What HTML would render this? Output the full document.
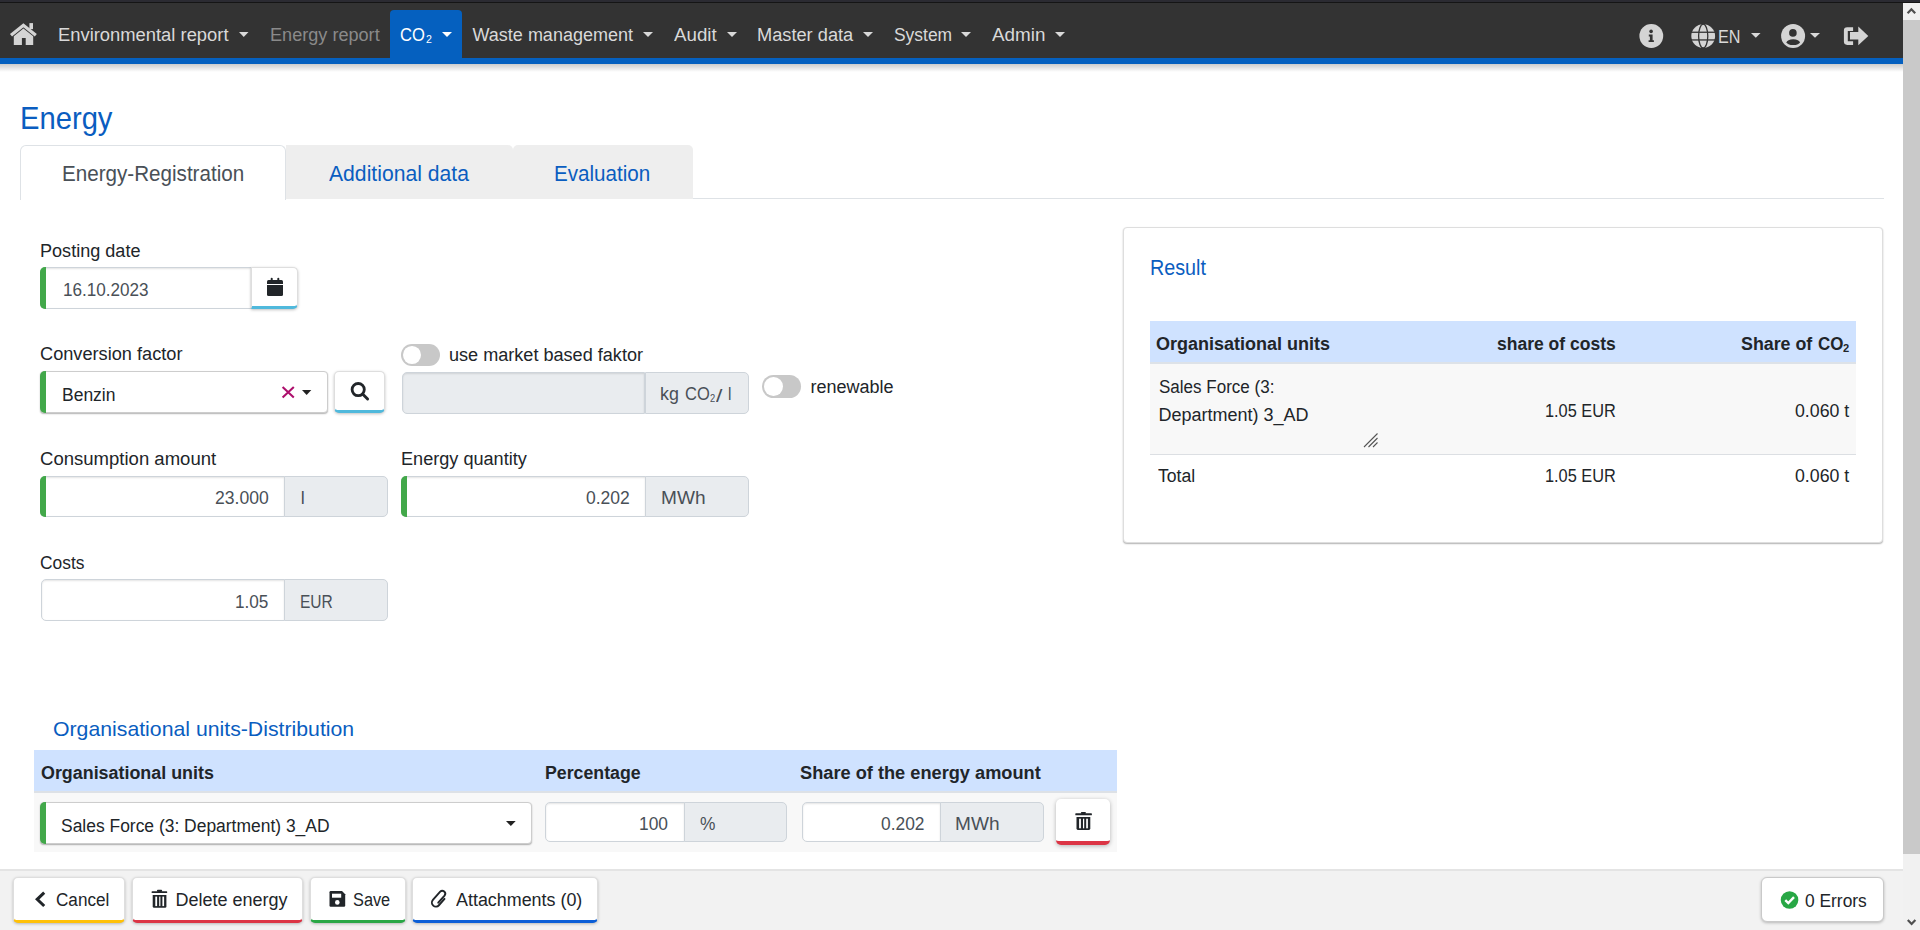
<!DOCTYPE html>
<html><head><meta charset="utf-8"><title>Energy</title>
<style>
html,body{margin:0;padding:0;width:1920px;height:930px;overflow:hidden;background:#fff;}
body{position:relative;font-family:"Liberation Sans",sans-serif;}
.t{position:absolute;white-space:nowrap;transform-origin:0 0;}
.b{position:absolute;}
svg.b{overflow:visible;}
</style></head><body>
<div class="b" style="left:0px;top:0px;width:1920px;height:2px;background:#2b2b32"></div>
<div class="b" style="left:0px;top:2px;width:1920px;height:1px;background:#151515"></div>
<div class="b" style="left:0px;top:3px;width:1903px;height:55px;background:#333333"></div>
<div class="b" style="left:0px;top:58px;width:1903px;height:6px;background:#0560bf"></div>
<div class="b" style="left:0px;top:64px;width:1903px;height:8px;background:linear-gradient(rgba(0,0,0,.2),rgba(0,0,0,0))"></div>
<div class="b" style="left:390px;top:10px;width:72px;height:48px;background:#0560bf;border-radius:4px 4px 0 0"></div>
<svg class="b" style="left:8px;top:20px;" width="32" height="28" viewBox="8 20 32 28"><path d="M11,35.3 L23.4,25.3 L35.8,35.3" fill="none" stroke="#d4d4d4" stroke-width="3.3"/><g fill="#d4d4d4"><rect x="29.4" y="23.1" width="3.6" height="6"/><path d="M13.8,45.1 V36.3 L23.4,28.6 L33.2,36.3 V45.1 H25.7 V38.1 H21.9 V45.1 Z"/></g></svg>
<div class="t" style="left:58.48px;top:25.20px;font-size:18px;line-height:20px;color:#d9d9d9;transform:scaleX(1.0205);">Environmental report</div>
<svg class="b" style="left:238px;top:31px;" width="11.5" height="7" viewBox="238 31 11.5 7"><polygon points="239,32 248.5,32 243.75,37" fill="#d9d9d9"/></svg>
<div class="t" style="left:269.50px;top:25.20px;font-size:18px;line-height:20px;color:#8a8a8a;transform:scaleX(1.0056);">Energy report</div>
<div class="t" style="left:400.32px;top:24.90px;font-size:18px;line-height:20px;color:#ffffff;transform:scaleX(0.9211);">CO</div>
<div class="t" style="left:426.10px;top:32.90px;font-size:11px;line-height:12px;color:#ffffff;transform:scaleX(0.9648);">2</div>
<svg class="b" style="left:441px;top:31px;" width="12" height="7" viewBox="441 31 12 7"><polygon points="442,32 452,32 447.0,37" fill="#ffffff"/></svg>
<div class="t" style="left:472.54px;top:25.20px;font-size:18px;line-height:20px;color:#d9d9d9;">Waste management</div>
<svg class="b" style="left:642px;top:31px;" width="12" height="7" viewBox="642 31 12 7"><polygon points="643,32 653,32 648.0,37" fill="#d9d9d9"/></svg>
<div class="t" style="left:674.24px;top:25.20px;font-size:18px;line-height:20px;color:#d9d9d9;transform:scaleX(1.0405);">Audit</div>
<svg class="b" style="left:726px;top:31px;" width="12" height="7" viewBox="726 31 12 7"><polygon points="727,32 737,32 732.0,37" fill="#d9d9d9"/></svg>
<div class="t" style="left:757.19px;top:25.20px;font-size:18px;line-height:20px;color:#d9d9d9;transform:scaleX(1.0122);">Master data</div>
<svg class="b" style="left:862px;top:31px;" width="12" height="7" viewBox="862 31 12 7"><polygon points="863,32 873,32 868.0,37" fill="#d9d9d9"/></svg>
<div class="t" style="left:893.52px;top:25.20px;font-size:18px;line-height:20px;color:#d9d9d9;transform:scaleX(0.9680);">System</div>
<svg class="b" style="left:960px;top:31px;" width="12" height="7" viewBox="960 31 12 7"><polygon points="961,32 971,32 966.0,37" fill="#d9d9d9"/></svg>
<div class="t" style="left:992.14px;top:25.20px;font-size:18px;line-height:20px;color:#d9d9d9;transform:scaleX(1.0470);">Admin</div>
<svg class="b" style="left:1054px;top:31px;" width="12" height="7" viewBox="1054 31 12 7"><polygon points="1055,32 1065,32 1060.0,37" fill="#d9d9d9"/></svg>
<svg class="b" style="left:1636px;top:21px;" width="32" height="30" viewBox="1636 21 32 30"><circle cx="1651.3" cy="36" r="11.9" fill="#d4d4d4"/><circle cx="1651.1" cy="31.4" r="1.8" fill="#333"/><path d="M1648.8,34.6 H1652.6 V40.2 H1653.9 V42 H1648.6 V40.2 H1649.9 V36.4 H1648.8 Z" fill="#333"/></svg>
<svg class="b" style="left:1688px;top:21px;" width="32" height="30" viewBox="1688 21 32 30"><circle cx="1703.2" cy="36.1" r="11.9" fill="#d4d4d4"/><ellipse cx="1703.2" cy="36.1" rx="4.6" ry="11.9" fill="none" stroke="#333" stroke-width="1.3"/><rect x="1691" y="31.6" width="24.5" height="1.3" fill="#333"/><rect x="1691" y="39.3" width="24.5" height="1.3" fill="#333"/></svg>
<div class="t" style="left:1718.10px;top:26.80px;font-size:18px;line-height:20px;color:#d9d9d9;transform:scaleX(0.8991);">EN</div>
<svg class="b" style="left:1750.4px;top:32px;" width="11.599999999999909" height="6.700000000000003" viewBox="1750.4 32 11.599999999999909 6.700000000000003"><polygon points="1751.4,33 1761,33 1756.2,37.7" fill="#d9d9d9"/></svg>
<svg class="b" style="left:1778px;top:21px;" width="32" height="30" viewBox="1778 21 32 30"><circle cx="1793.1" cy="36" r="12" fill="#d4d4d4"/><circle cx="1792.9" cy="32.9" r="3.8" fill="#333"/><ellipse cx="1793.2" cy="42.2" rx="6.6" ry="2.9" fill="#333"/></svg>
<svg class="b" style="left:1809px;top:32px;" width="12" height="6.799999999999997" viewBox="1809 32 12 6.799999999999997"><polygon points="1810,33 1820,33 1815.0,37.8" fill="#d9d9d9"/></svg>
<svg class="b" style="left:1840px;top:22px;" width="32" height="28" viewBox="1840 22 32 28"><path d="M1853.1,27.2 H1847.2 Q1843.9,27.2 1843.9,30.5 V41.6 Q1843.9,44.9 1847.2,44.9 H1853.1 V41.2 H1847.8 V30.9 H1853.1 Z" fill="#d4d4d4"/><path d="M1850,32 H1858.3 V26.6 L1868.3,36 L1858.3,45.2 V39.6 H1850 Z" fill="#d4d4d4"/></svg>
<div class="t" style="left:20.38px;top:100.10px;font-size:32px;line-height:36px;color:#0a5dc0;transform:scaleX(0.9119);">Energy</div>
<div class="b" style="left:20px;top:198px;width:1864px;height:1px;background:#dee2e6"></div>
<div class="b" style="left:20px;top:145px;width:266px;height:55px;background:#fff;border:1px solid #dee2e6;border-bottom:none;border-radius:6px 6px 0 0;box-sizing:border-box"></div>
<div class="b" style="left:286px;top:145px;width:226.6px;height:53.5px;background:#eeeeee;border-radius:0 5px 0 0"></div>
<div class="b" style="left:513px;top:145px;width:179.6px;height:53.5px;background:#eeeeee;border-radius:5px 5px 0 0"></div>
<div class="t" style="left:61.54px;top:161.10px;font-size:22px;line-height:25px;color:#495057;transform:scaleX(0.9371);">Energy-Registration</div>
<div class="t" style="left:329.33px;top:161.10px;font-size:22px;line-height:25px;color:#0a5dc0;transform:scaleX(0.9614);">Additional data</div>
<div class="t" style="left:554.44px;top:161.10px;font-size:22px;line-height:25px;color:#0a5dc0;transform:scaleX(0.9363);">Evaluation</div>
<div class="t" style="left:40.40px;top:241.00px;font-size:18px;line-height:20px;color:#212529;transform:scaleX(1.0038);">Posting date</div>
<div class="b" style="left:40px;top:267px;width:212px;height:41.5px;background:#fff;border:1px solid #ced4da;box-sizing:border-box;border-radius:5px 0 0 5px;box-shadow:inset 0 1px 2px rgba(0,0,0,.11);"></div>
<div class="b" style="left:40px;top:267px;width:6px;height:41.5px;background:#42a84a;border-radius:5px 0 0 5px"></div>
<div class="t" style="left:62.56px;top:279.50px;font-size:18px;line-height:20px;color:#495057;transform:scaleX(0.9500);">16.10.2023</div>
<div class="b" style="left:251px;top:266.5px;width:47px;height:42.5px;background:#fff;box-sizing:border-box;border-radius:0 5px 5px 0;border:1px solid #dedede;border-bottom:3px solid #50b9dc;box-shadow:0 1px 3px rgba(0,0,0,.25)"></div>
<svg class="b" style="left:265px;top:276px;" width="20" height="22" viewBox="265 276 20 22"><g fill="#212529"><rect x="270.7" y="277.8" width="2" height="3" rx="1"/><rect x="277.3" y="277.8" width="2" height="3" rx="1"/><path d="M267,281.5 Q267,280 268.5,280 H281.5 Q283,280 283,281.5 V284 H267 Z"/><path d="M267,285 H283 V294.6 Q283,296.1 281.5,296.1 H268.5 Q267,296.1 267,294.6 Z"/></g></svg>
<div class="t" style="left:39.74px;top:344.00px;font-size:18px;line-height:20px;color:#212529;transform:scaleX(1.0100);">Conversion factor</div>
<div class="b" style="left:40px;top:371px;width:288px;height:42px;background:#fff;border:1px solid #cdcdcd;box-sizing:border-box;border-radius:4px;box-shadow:0 1px 1.5px rgba(0,0,0,.3);"></div>
<div class="b" style="left:40px;top:371px;width:6px;height:42px;background:#42a84a;border-radius:5px 0 0 5px"></div>
<div class="t" style="left:61.83px;top:385.00px;font-size:18px;line-height:20px;color:#212529;transform:scaleX(0.9716);">Benzin</div>
<svg class="b" style="left:280px;top:384px;" width="17" height="16" viewBox="280 384 17 16"><path d="M282.6,387 L293.8,397.4 M293.8,387 L282.6,397.4" stroke="#ad0f6c" stroke-width="2.1"/></svg>
<svg class="b" style="left:300.6px;top:389px;" width="11.299999999999955" height="7" viewBox="300.6 389 11.299999999999955 7"><polygon points="301.6,390 310.9,390 306.25,395" fill="#222"/></svg>
<div class="b" style="left:334.4px;top:370.6px;width:50.9px;height:42.2px;background:#fff;box-sizing:border-box;border-radius:5px;border:1px solid #dedede;border-bottom:3px solid #50b9dc;box-shadow:0 1px 3px rgba(0,0,0,.25)"></div>
<svg class="b" style="left:348px;top:379px;" width="24" height="24" viewBox="348 379 24 24"><circle cx="358.2" cy="389.6" r="6.1" fill="none" stroke="#212529" stroke-width="2.8"/><path d="M362.6,394 L367.6,399" stroke="#212529" stroke-width="2.9" stroke-linecap="round"/></svg>
<div class="b" style="left:401px;top:344.2px;width:39px;height:21.8px;background:#c8c8c8;border-radius:10.900000000000006px"></div>
<div class="b" style="left:403px;top:346.2px;width:17.8px;height:17.8px;background:#fff;border-radius:50%"></div>
<div class="t" style="left:448.86px;top:344.70px;font-size:18px;line-height:20px;color:#212529;transform:scaleX(1.0046);">use market based faktor</div>
<div class="b" style="left:401.5px;top:372.3px;width:243.5px;height:41.7px;background:#e9ecef;border:1px solid #ced4da;box-sizing:border-box;border-radius:5px 0 0 5px;box-shadow:inset 0 1px 2px rgba(0,0,0,.11);"></div>
<div class="b" style="left:644.5px;top:372.3px;width:104.1px;height:41.7px;background:#e9ecef;border:1px solid #ced4da;box-sizing:border-box;border-radius:0 5px 5px 0"></div>
<div class="t" style="left:660.05px;top:383.90px;font-size:18px;line-height:20px;color:#495057;transform:scaleX(0.9922);">kg</div>
<div class="t" style="left:684.72px;top:383.90px;font-size:18px;line-height:20px;color:#495057;transform:scaleX(0.9172);">CO</div>
<div class="t" style="left:710.10px;top:391.80px;font-size:11px;line-height:12px;color:#495057;transform:scaleX(0.8483);">2</div>
<div class="t" style="left:716.18px;top:385.50px;font-size:18px;line-height:20px;color:#495057;transform:scaleX(1.2740);">/</div>
<div class="t" style="left:728.48px;top:383.90px;font-size:18px;line-height:20px;color:#495057;transform:scaleX(0.8516);">l</div>
<div class="b" style="left:762.3px;top:375.2px;width:38.7px;height:22.8px;background:#c8c8c8;border-radius:11.400000000000006px"></div>
<div class="b" style="left:764.3px;top:377.2px;width:18.8px;height:18.8px;background:#fff;border-radius:50%"></div>
<div class="t" style="left:810.54px;top:377.00px;font-size:18px;line-height:20px;color:#212529;">renewable</div>
<div class="t" style="left:39.72px;top:449.00px;font-size:18px;line-height:20px;color:#212529;transform:scaleX(1.0297);">Consumption amount</div>
<div class="b" style="left:40px;top:476px;width:245px;height:41px;background:#fff;border:1px solid #ced4da;box-sizing:border-box;border-radius:5px 0 0 5px;box-shadow:inset 0 1px 2px rgba(0,0,0,.11);"></div>
<div class="b" style="left:40px;top:476px;width:6px;height:41px;background:#42a84a;border-radius:5px 0 0 5px"></div>
<div class="b" style="left:284.3px;top:476px;width:103.5px;height:41px;background:#e9ecef;border:1px solid #ced4da;box-sizing:border-box;border-radius:0 5px 5px 0"></div>
<div class="t" style="left:215.19px;top:487.60px;font-size:18px;line-height:20px;color:#495057;transform:scaleX(0.9765);">23.000</div>
<div class="t" style="left:300.74px;top:487.60px;font-size:18px;line-height:20px;color:#495057;">l</div>
<div class="t" style="left:401.00px;top:449.00px;font-size:18px;line-height:20px;color:#212529;transform:scaleX(1.0058);">Energy quantity</div>
<div class="b" style="left:401px;top:476px;width:245px;height:41px;background:#fff;border:1px solid #ced4da;box-sizing:border-box;border-radius:5px 0 0 5px;box-shadow:inset 0 1px 2px rgba(0,0,0,.11);"></div>
<div class="b" style="left:401px;top:476px;width:6px;height:41px;background:#42a84a;border-radius:5px 0 0 5px"></div>
<div class="b" style="left:645.3px;top:476px;width:103.5px;height:41px;background:#e9ecef;border:1px solid #ced4da;box-sizing:border-box;border-radius:0 5px 5px 0"></div>
<div class="t" style="left:585.80px;top:487.60px;font-size:18px;line-height:20px;color:#495057;transform:scaleX(0.9740);">0.202</div>
<div class="t" style="left:660.94px;top:487.60px;font-size:18px;line-height:20px;color:#495057;transform:scaleX(1.0597);">MWh</div>
<div class="t" style="left:39.78px;top:553.10px;font-size:18px;line-height:20px;color:#212529;transform:scaleX(0.9650);">Costs</div>
<div class="b" style="left:40.5px;top:579px;width:244.5px;height:41.6px;background:#fff;border:1px solid #ced4da;box-sizing:border-box;border-radius:5px 0 0 5px;box-shadow:inset 0 1px 2px rgba(0,0,0,.11);"></div>
<div class="b" style="left:284.3px;top:579px;width:103.5px;height:41.6px;background:#e9ecef;border:1px solid #ced4da;box-sizing:border-box;border-radius:0 5px 5px 0"></div>
<div class="t" style="left:235.26px;top:591.60px;font-size:18px;line-height:20px;color:#495057;transform:scaleX(0.9537);">1.05</div>
<div class="t" style="left:300.44px;top:591.60px;font-size:18px;line-height:20px;color:#495057;transform:scaleX(0.8635);">EUR</div>
<div class="t" style="left:53.28px;top:716.50px;font-size:21px;line-height:23px;color:#0a5dc0;transform:scaleX(1.0118);">Organisational units-Distribution</div>
<div class="b" style="left:34px;top:750px;width:1083px;height:41.5px;background:#cfe2ff"></div>
<div class="b" style="left:34px;top:791.3px;width:1083px;height:2.0px;background:#dde1e6"></div>
<div class="b" style="left:34px;top:793px;width:1083px;height:58.5px;background:#f8f8f8"></div>
<div class="t" style="left:40.56px;top:762.60px;font-size:18px;line-height:20px;color:#212529;font-weight:bold;transform:scaleX(0.9932);">Organisational units</div>
<div class="t" style="left:544.95px;top:762.60px;font-size:18px;line-height:20px;color:#212529;font-weight:bold;transform:scaleX(0.9857);">Percentage</div>
<div class="t" style="left:799.82px;top:762.60px;font-size:18px;line-height:20px;color:#212529;font-weight:bold;transform:scaleX(1.0115);">Share of the energy amount</div>
<div class="b" style="left:40px;top:802px;width:491.5px;height:42px;background:#fff;border:1px solid #cdcdcd;box-sizing:border-box;border-radius:4px;box-shadow:0 1px 1.5px rgba(0,0,0,.3);"></div>
<div class="b" style="left:40px;top:802px;width:6px;height:42px;background:#42a84a;border-radius:5px 0 0 5px"></div>
<div class="t" style="left:61.21px;top:816.40px;font-size:18px;line-height:20px;color:#212529;transform:scaleX(0.9690);">Sales Force (3: Department) 3_AD</div>
<svg class="b" style="left:505px;top:820px;" width="11.700000000000045" height="7" viewBox="505 820 11.700000000000045 7"><polygon points="506,821 515.7,821 510.85,826" fill="#222"/></svg>
<div class="b" style="left:545.4px;top:802.4px;width:139.6px;height:40.0px;background:#fff;border:1px solid #ced4da;box-sizing:border-box;border-radius:5px 0 0 5px;box-shadow:inset 0 1px 2px rgba(0,0,0,.11);"></div>
<div class="b" style="left:684.4px;top:802.4px;width:103.1px;height:40.0px;background:#e9ecef;border:1px solid #ced4da;box-sizing:border-box;border-radius:0 5px 5px 0"></div>
<div class="t" style="left:639.35px;top:813.90px;font-size:18px;line-height:20px;color:#495057;transform:scaleX(0.9647);">100</div>
<div class="t" style="left:699.73px;top:813.90px;font-size:18px;line-height:20px;color:#495057;transform:scaleX(0.9648);">%</div>
<div class="b" style="left:801.5px;top:802.4px;width:139.5px;height:40.0px;background:#fff;border:1px solid #ced4da;box-sizing:border-box;border-radius:5px 0 0 5px;box-shadow:inset 0 1px 2px rgba(0,0,0,.11);"></div>
<div class="b" style="left:940.2px;top:802.4px;width:103.4px;height:40.0px;background:#e9ecef;border:1px solid #ced4da;box-sizing:border-box;border-radius:0 5px 5px 0"></div>
<div class="t" style="left:880.51px;top:813.90px;font-size:18px;line-height:20px;color:#495057;transform:scaleX(0.9648);">0.202</div>
<div class="t" style="left:955.44px;top:813.90px;font-size:18px;line-height:20px;color:#495057;transform:scaleX(1.0597);">MWh</div>
<div class="b" style="left:1055.6px;top:799px;width:54.6px;height:45.5px;background:#fff;box-sizing:border-box;border-radius:5px;border-bottom:4px solid #dc3545;box-shadow:0 1px 4px rgba(0,0,0,.28)"></div>
<svg class="b" style="left:1073px;top:810px;" width="21" height="22" viewBox="1073 810 21 22"><g fill="#212529"><rect x="1075.3" y="813.3" width="16.6" height="2.0" rx="0.6"/><rect x="1080.9" y="812.0" width="5.0" height="1.9" rx="0.8"/><path d="M1076.5,817.0 H1090.3 V828.6 Q1090.3,830.0 1088.9,830.0 H1077.9 Q1076.5,830.0 1076.5,828.6 Z"/></g><rect x="1079.1" y="818.7" width="1.8" height="9.6" fill="#fff"/><rect x="1083.0" y="818.7" width="1.2" height="9.6" fill="#fff"/><rect x="1086.2" y="818.7" width="1.7" height="9.6" fill="#fff"/></svg>
<div class="b" style="left:1122.5px;top:226.5px;width:760.5px;height:316.5px;background:#fff;border:1px solid #dedede;box-sizing:border-box;border-radius:4px;box-shadow:0 1px 1.5px rgba(0,0,0,.3)"></div>
<div class="t" style="left:1149.91px;top:255.00px;font-size:22px;line-height:25px;color:#0a5dc0;transform:scaleX(0.8978);">Result</div>
<div class="b" style="left:1150.3px;top:321px;width:705.7px;height:42px;background:#cfe2ff"></div>
<div class="b" style="left:1150.3px;top:361.5px;width:705.7px;height:2.0px;background:#dde2e8"></div>
<div class="b" style="left:1150.3px;top:363.5px;width:705.7px;height:90.0px;background:#f8f8f8"></div>
<div class="b" style="left:1150.3px;top:453.5px;width:705.7px;height:1.5px;background:#dcdfe3"></div>
<div class="t" style="left:1156.05px;top:333.60px;font-size:18px;line-height:20px;color:#212529;font-weight:bold;">Organisational units</div>
<div class="t" style="left:1496.67px;top:333.60px;font-size:18px;line-height:20px;color:#212529;font-weight:bold;transform:scaleX(0.9729);">share of costs</div>
<div class="t" style="left:1741.04px;top:333.60px;font-size:18px;line-height:20px;color:#212529;font-weight:bold;transform:scaleX(0.9900);">Share of</div>
<div class="t" style="left:1817.60px;top:333.60px;font-size:18px;line-height:20px;color:#212529;font-weight:bold;transform:scaleX(0.9418);">CO</div>
<div class="t" style="left:1843.41px;top:342.80px;font-size:10px;line-height:11px;color:#212529;font-weight:bold;transform:scaleX(1.1128);">2</div>
<div class="t" style="left:1158.64px;top:377.20px;font-size:18px;line-height:20px;color:#212529;transform:scaleX(0.9453);">Sales Force (3:</div>
<div class="t" style="left:1158.50px;top:405.30px;font-size:18px;line-height:20px;color:#212529;">Department) 3_AD</div>
<svg class="b" style="left:1362px;top:431px;" width="18" height="18" viewBox="1362 431 18 18"><path d="M1364,447 L1377.5,433.5 M1368.5,447 L1377.5,438 M1373,447 L1377.5,442.5" stroke="#555" stroke-width="1.1"/></svg>
<div class="t" style="left:1544.60px;top:400.80px;font-size:18px;line-height:20px;color:#212529;transform:scaleX(0.9075);">1.05 EUR</div>
<div class="t" style="left:1795.40px;top:400.80px;font-size:18px;line-height:20px;color:#212529;transform:scaleX(0.9856);">0.060 t</div>
<div class="t" style="left:1157.51px;top:466.00px;font-size:18px;line-height:20px;color:#212529;transform:scaleX(0.9788);">Total</div>
<div class="t" style="left:1544.60px;top:465.80px;font-size:18px;line-height:20px;color:#212529;transform:scaleX(0.9075);">1.05 EUR</div>
<div class="t" style="left:1795.40px;top:465.80px;font-size:18px;line-height:20px;color:#212529;transform:scaleX(0.9856);">0.060 t</div>
<div class="b" style="left:0px;top:869px;width:1903px;height:61px;background:#f2f2f2"></div>
<div class="b" style="left:0px;top:869px;width:1903px;height:2px;background:#e4e4e4"></div>
<div class="b" style="left:12.9px;top:877px;width:112.2px;height:45.6px;background:#fff;box-sizing:border-box;border-radius:5px;border:1px solid #dedede;border-bottom:3px solid #ffc107;box-shadow:0 1px 3px rgba(0,0,0,.25)"></div>
<svg class="b" style="left:32px;top:889px;" width="16" height="20" viewBox="32 889 16 20"><path d="M44.2,892.6 L37.2,899.3 L44.2,906" fill="none" stroke="#212529" stroke-width="3"/></svg>
<div class="t" style="left:56.19px;top:889.80px;font-size:18px;line-height:20px;color:#212529;transform:scaleX(0.9516);">Cancel</div>
<div class="b" style="left:131.6px;top:877px;width:171.6px;height:45.6px;background:#fff;box-sizing:border-box;border-radius:5px;border:1px solid #dedede;border-bottom:3px solid #dc3545;box-shadow:0 1px 3px rgba(0,0,0,.25)"></div>
<svg class="b" style="left:149px;top:887px;" width="21" height="23" viewBox="149 887 21 23"><g fill="#212529"><rect x="151.6" y="891.3" width="15.6" height="1.8" rx="0.6"/><rect x="157.0" y="889.8" width="5.1" height="2.1" rx="0.8"/><path d="M152.7,894.9 H166.4 V906.4 Q166.4,907.8 165.0,907.8 H154.1 Q152.7,907.8 152.7,906.4 Z"/></g><rect x="155.3" y="896.6" width="1.8" height="9.5" fill="#fff"/><rect x="159.2" y="896.6" width="1.2" height="9.5" fill="#fff"/><rect x="162.4" y="896.6" width="1.7" height="9.5" fill="#fff"/></svg>
<div class="t" style="left:175.51px;top:889.80px;font-size:18px;line-height:20px;color:#212529;">Delete energy</div>
<div class="b" style="left:310px;top:877px;width:95.7px;height:45.6px;background:#fff;box-sizing:border-box;border-radius:5px;border:1px solid #dedede;border-bottom:3px solid #28a745;box-shadow:0 1px 3px rgba(0,0,0,.25)"></div>
<svg class="b" style="left:327px;top:889px;" width="21" height="20" viewBox="327 889 21 20"><path d="M329.5,892.3 Q329.5,891.1 330.7,891.1 H342 L345.2,894.3 V905.6 Q345.2,906.8 344,906.8 H330.7 Q329.5,906.8 329.5,905.6 Z" fill="#212529"/><rect x="332" y="893.7" width="9.2" height="4" fill="#fff"/><circle cx="337.3" cy="902.4" r="2.3" fill="#fff"/></svg>
<div class="t" style="left:353.47px;top:889.80px;font-size:18px;line-height:20px;color:#212529;transform:scaleX(0.9059);">Save</div>
<div class="b" style="left:412.2px;top:877px;width:185.7px;height:45.6px;background:#fff;box-sizing:border-box;border-radius:5px;border:1px solid #dedede;border-bottom:3px solid #0b5ed7;box-shadow:0 1px 3px rgba(0,0,0,.25)"></div>
<svg class="b" style="left:429px;top:887px;" width="21" height="23" viewBox="429 887 21 23"><path d="M444.52,898.88 L438.90,905.25 A4.0,4.0 0 0 1 432.90,899.95 L440.19,891.71 A2.9,2.9 0 0 1 444.53,895.55 L438.24,902.67" fill="none" stroke="#212529" stroke-width="1.9" stroke-linecap="round"/></svg>
<div class="t" style="left:456.34px;top:889.80px;font-size:18px;line-height:20px;color:#212529;transform:scaleX(0.9941);">Attachments (0)</div>
<div class="b" style="left:1761.3px;top:877.4px;width:122.4px;height:44.7px;background:#fff;border:1px solid #c9c9c9;box-sizing:border-box;border-radius:6px;box-shadow:0 1px 3px rgba(0,0,0,.25)"></div>
<svg class="b" style="left:1779px;top:889px;" width="22" height="22" viewBox="1779 889 22 22"><circle cx="1789.55" cy="899.95" r="8.8" fill="#28a745"/><path d="M1785.3,900.2 L1788.3,903.1 L1794,897.1" fill="none" stroke="#fff" stroke-width="2.4"/></svg>
<div class="t" style="left:1805.31px;top:890.60px;font-size:18px;line-height:20px;color:#212529;transform:scaleX(0.9649);">0 Errors</div>
<div class="b" style="left:1903px;top:3px;width:17px;height:927px;background:#f1f1f1"></div>
<div class="b" style="left:1903px;top:20px;width:17px;height:834px;background:#c9c9c9"></div>
<svg class="b" style="left:1905px;top:5px;" width="14" height="12" viewBox="1905 5 14 12"><path d="M1907.6,13.3 L1911.4,9.3 L1915.2,13.3" fill="none" stroke="#505050" stroke-width="2.2"/></svg>
<svg class="b" style="left:1905px;top:915px;" width="14" height="12" viewBox="1905 915 14 12"><path d="M1907.8,920 L1911.6,924 L1915.4,920" fill="none" stroke="#505050" stroke-width="2.2"/></svg>
</body></html>
